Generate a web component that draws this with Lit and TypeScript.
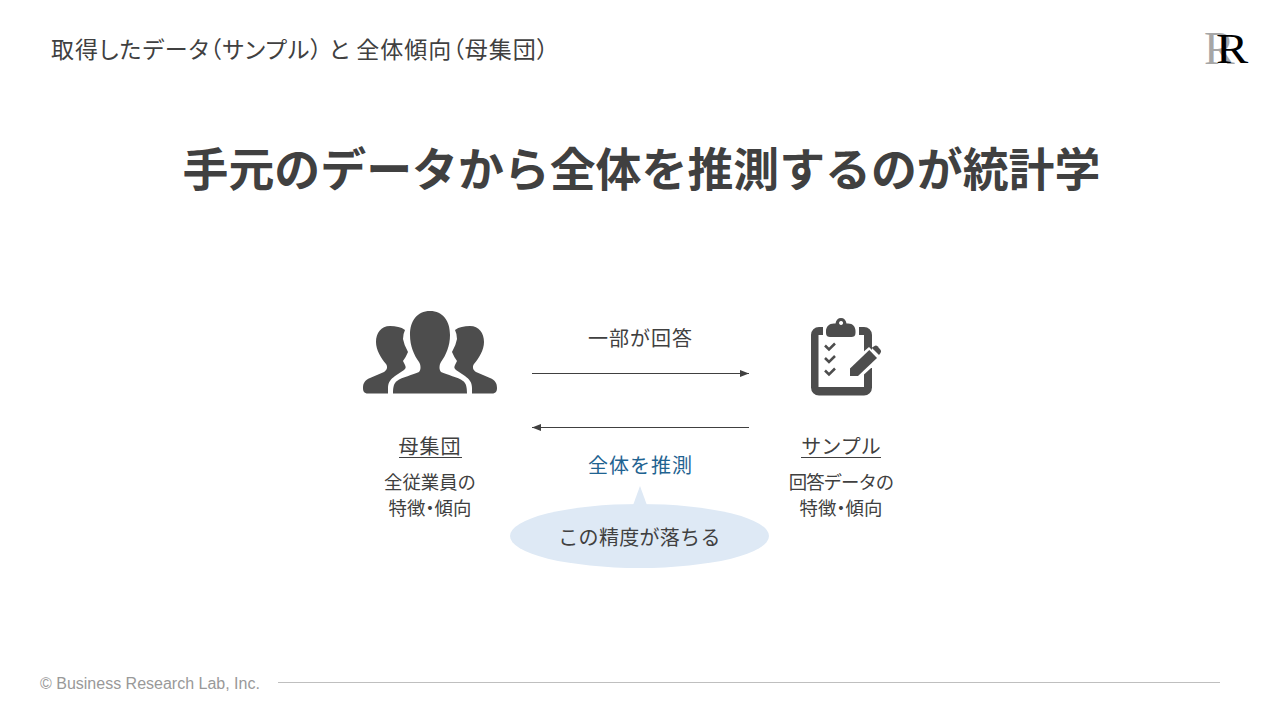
import { LitElement, html, css, svg } from "lit";
import { customElement } from "lit/decorators.js";

@customElement("app-root")
export class AppRoot extends LitElement {
  static styles = css`
    :host { display: block; width: 1280px; height: 720px; background: #fff; overflow: hidden; font-family: "Noto Sans CJK JP", "Noto Sans", sans-serif; color: #404040; }
    .page { width: 1280px; height: 720px; display: flex; flex-direction: column; }
    .header { height: 100px; flex: none; display: flex; align-items: center; justify-content: space-between; padding: 0 30px 0 51px; }
    .title { font-size: 23px; line-height: 30px; font-feature-settings: "palt"; letter-spacing: 1px; margin-top: -4px; }
    .logo { position: relative; width: 44px; height: 40px; font-family: "Liberation Serif", serif; margin-top: -8px; }
    .logo span { position: absolute; line-height: 1; }
    .logo .g { left: -2px; top: 0; font-size: 46px; color: #a6a6a6; }
    .logo .k { left: 10px; top: 2px; font-size: 42px; color: #000; transform: scaleX(1.15); transform-origin: left center; }
    .headline { margin: 32px 0 0; padding-left: 3px; font-size: 45.9px; line-height: 68px; height: 68px; font-weight: 700; text-align: center; white-space: nowrap; }
    .diagram { margin: 111px 0 0 328px; display: grid; grid-template-columns: 204px 217px 184px; }
    .side { display: flex; flex-direction: column; align-items: center; }
    .icon { display: block; height: 90px; flex: none; }
    .name { margin-top: 34px; font-size: 20px; line-height: 22px; height: 22px; border-bottom: 1px solid #404040; letter-spacing: 1px; }
    .name.tight { letter-spacing: 0; }
    .desc { margin-top: 10px; font-size: 18.4px; line-height: 26px; text-align: center; }
    .dot { font-feature-settings: "palt"; }
    .narrow { letter-spacing: -1px; }
    .mid { display: flex; flex-direction: column; align-items: center; }
    .m1 { margin-top: 12px; font-size: 20px; line-height: 30px; letter-spacing: 1px; }
    .arrow { display: block; flex: none; }
    .a1 { margin-top: 16px; }
    .a2 { margin-top: 45px; }
    .est { margin-top: 18px; font-size: 20px; line-height: 30px; color: #1f6391; letter-spacing: 1px; }
    .bubble { position: relative; flex: none; margin: 24px 2px 0 0; width: 259px; height: 64px; border-radius: 50%; background: #dee9f5; display: flex; align-items: center; justify-content: center; font-size: 20px; letter-spacing: 0.3px; }
    .bubble::before { content: ""; position: absolute; left: 122px; top: -18px; width: 16px; height: 22px; background: #dee9f5; clip-path: polygon(50% 0, 100% 100%, 0 100%); }
    .footer { margin-top: auto; height: 46px; flex: none; display: flex; align-items: flex-start; padding: 0 60px 0 40px; gap: 18px; font-family: "Liberation Sans", sans-serif; font-size: 16px; line-height: 20px; color: #999; }
    .rule { flex: 1; height: 1px; background: #bfbfbf; margin-top: 8px; }
  `;

  people() {
    const side = svg`<path d="M27 15C18 15 13 22 13 31C13 39 18 47 23 53C25 56 24 59 21 61L7 67C2 69 0 72 0 77C0 80 1 82.500 5 82.500H25V77C25 71 28 68 32 65L41 59C43 57.500 43 56 42 54L40 50Q43 46 45 41Q41 34 40 28Q40 23 42 19C38 16 33 15 27 15Z"/>`;
    return html`<svg class="icon" width="134" height="90" viewBox="0 0 134 90" fill="#4d4d4d">
      ${side}
      <g transform="translate(134 0) scale(-1 1)">${side}</g>
      <path d="M67 0C54 0 47 10 47 24C47 35 51 44 56 51C58 54 58 59 56 61C50 64 39 66 34 70C31 72 30 76 30 82.500H104C104 76 103 72 100 70C95 66 84 64 78 61C76 59 76 54 78 51C83 44 87 35 87 24C87 10 80 0 67 0Z"/>
    </svg>`;
  }

  clip() {
    return html`<svg class="icon" width="82" height="90" viewBox="800 311 82 90" fill="#4d4d4d">
      <path d="M823 327H819A8 8 0 0 0 811 335V387.500A8 8 0 0 0 819 395.500H864A8 8 0 0 0 872 387.500V368H864V387H818.500V335H823ZM859 327H864A8 8 0 0 1 872 335V350L864 357V335H859Z" />
      <path fill-rule="evenodd" d="M826 331C826 327 829 323.500 834 323.500H835.500C836 320 838 318 841 318C844 318 846 320 846.500 323.500H848C853 323.500 855.500 327 855.500 331V333C855.500 336 853.500 337 851.500 337H830C828 337 826 336 826 333ZM841 321A2 2 0 1 0 841.100 321Z"/>
      <path fill="none" stroke="#4d4d4d" stroke-width="2.500" d="M825 345.500L829 349.500L835 343.500M825 358L829 362L835 356M825 370.500L829 374.500L835 368.500"/>
      <path fill="#fff" d="M847 366L869 347L881 359L859 379H847Z"/>
      <path d="M850 376V368.500L869.300 350L877 358L858 376Z"/>
      <path d="M871.700 347.700L875 345.700Q876.500 345.200 877.500 346.200L880.700 350Q881.500 351.500 880.500 353L879 355Z"/>
    </svg>`;
  }

  arrow(cls: string, left: boolean) {
    return html`<svg class="arrow ${cls}" width="217" height="9" viewBox="0 0 217 9">
      <rect x="0" y="4" width="217" height="1" fill="#404040"/>
      <path fill="#404040" d=${left ? "M0 4.500L9 1V8Z" : "M217 4.500L208 1V8Z"}/>
    </svg>`;
  }

  render() {
    return html`<div class="page">
      <header class="header">
        <div class="title">取得したデータ（サンプル） と 全体傾向（母集団）</div>
        <div class="logo"><span class="g">R</span><span class="k">R</span></div>
      </header>
      <h1 class="headline">手元のデータから全体を推測するのが統計学</h1>
      <section class="diagram">
        <div class="side">
          ${this.people()}
          <div class="name">母集団</div>
          <div class="desc">全従業員の<br />特徴<span class="dot">・</span>傾向</div>
        </div>
        <div class="mid">
          <div class="m1">一部が回答</div>
          ${this.arrow("a1", false)}
          ${this.arrow("a2", true)}
          <div class="est">全体を推測</div>
          <div class="bubble">この精度が落ちる</div>
        </div>
        <div class="side">
          ${this.clip()}
          <div class="name tight">サンプル</div>
          <div class="desc"><span class="narrow">回答データの</span><br />特徴<span class="dot">・</span>傾向</div>
        </div>
      </section>
      <footer class="footer"><span>© Business Research Lab, Inc.</span><div class="rule"></div></footer>
    </div>`;
  }
}
